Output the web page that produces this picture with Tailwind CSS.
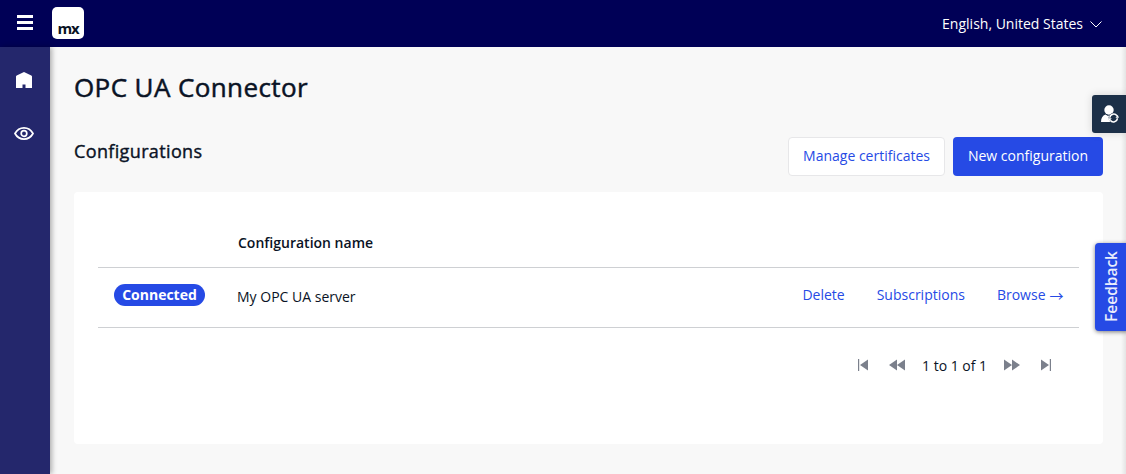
<!DOCTYPE html>
<html lang="en">
<head>
<meta charset="utf-8">
<title>OPC UA Connector</title>
<script src="https://cdn.jsdelivr.net/npm/@tailwindcss/browser@4"></script>
</head>
<body class="relative flex h-[474px] w-[1126px] flex-col overflow-hidden bg-[#f8f8f8] font-['Open_Sans','Noto_Sans',sans-serif] text-[14px] leading-5 text-[#0a1325]">
  <header class="flex h-[47px] shrink-0 items-center bg-[#000056] pl-[17px] pr-6 text-white">
    <svg class="mb-[2px] h-[15px] w-4" viewBox="0 0 16 15" fill="currentColor"><path d="M0 0h16v3H0zM0 6h16v3H0zM0 12h16v3H0z"/></svg>
    <div class="mb-px ml-[19px] flex h-8 w-8 items-end justify-center rounded-[5px] bg-white pb-[2px] text-[15px] font-bold leading-[18px] tracking-[-1.200px] text-[#0a1325]">mx</div>
    <div class="ml-auto flex items-center">
      <span>English, United States</span>
      <svg class="ml-[7px] mt-[2px] h-[7px] w-3" viewBox="0 0 12 7" fill="none" stroke="currentColor" stroke-width="1"><path d="M.5.5 6 6 11.5.5"/></svg>
    </div>
  </header>
  <div class="flex min-h-0 flex-1">
    <nav class="flex w-[50px] shrink-0 flex-col items-center bg-[#24276c] pr-[2px] pt-[25px] text-white shadow-[2px_0_5px_rgba(0,0,0,0.3)]">
      <svg class="h-4 w-4" viewBox="0 0 16 16" fill="currentColor"><path d="M8 0l7.300 3.500q.7.300.7 1V16H9.500v-3.500h-3V16H0V4.500q0-.7.7-1z"/></svg>
      <svg class="mt-[39px] h-[13px] w-5" viewBox="0 0 20 13" fill="none" stroke="currentColor" stroke-width="1.700"><path d="M1 6.500C3 2.800 6.200.9 10 .9s7 1.900 9 5.600c-2 3.700-5.200 5.600-9 5.600S3 10.200 1 6.500z"/><circle cx="10" cy="6.500" r="2.800"/></svg>
    </nav>
    <main class="flex-1 pl-6 pr-[23px] pt-[22px]">
      <h1 class="whitespace-nowrap text-[26px] font-normal leading-9 tracking-[0.400px] [-webkit-text-stroke:0.500px_#0a1325]">OPC UA Connector</h1>
      <div class="mt-8 flex h-[39px] justify-between">
        <h2 class="pt-[2px] text-[18px] font-normal leading-6 tracking-[0.360px] [-webkit-text-stroke:0.400px_#0a1325]">Configurations</h2>
        <div class="flex gap-2">
          <button class="w-[157px] rounded-[4px] border border-[#e7e7e9] bg-white pb-[2px] text-[#264ae5]">Manage certificates</button>
          <button class="w-[150px] rounded-[4px] bg-[#264ae5] pb-[2px] text-white">New configuration</button>
        </div>
      </div>
      <section class="mt-4 h-[252px] rounded-[4px] bg-white px-6 pt-[35px]">
        <div class="h-[41px] border-b border-[#ced0d3] pl-[140px] pt-[6px] text-[14px] font-semibold leading-5">Configuration name</div>
        <div class="flex h-[60px] border-b border-[#ced0d3] pl-4 pr-[15.500px] pt-4">
          <span class="h-[22px] w-[91px] rounded-full bg-[#264ae5] text-center font-bold leading-[22px] text-white">Connected</span>
          <span class="ml-8 pt-[3px]">My OPC UA server</span>
          <div class="ml-auto flex gap-8 pt-px text-[#264ae5]"><a>Delete</a><a>Subscriptions</a><a class="flex">Browse<span class="ml-1 font-['Noto_Sans_CJK_JP',sans-serif]">→</span></a></div>
        </div>
        <div class="flex items-center pl-[760px] pt-[28px] text-[#7b808c]">
          <svg class="mb-[2px] h-3 w-[10px]" viewBox="0 0 10 12" fill="currentColor"><path d="M0 0h1.200v12H0zM10 .5v11L2 6z"/></svg>
          <svg class="mb-[2px] ml-[21px] h-3 w-4" viewBox="0 0 16 12" fill="currentColor"><path d="M8 .5v11L0 6zM16 .5v11L8 6z"/></svg>
          <span class="ml-[17px] text-[#0a1325]">1 to 1 of 1</span>
          <svg class="mb-[2px] ml-[17px] h-3 w-4" viewBox="0 0 16 12" fill="currentColor"><path d="M0 .5v11L8 6zM8 .5v11L16 6z"/></svg>
          <svg class="mb-[2px] ml-[21px] h-3 w-[10px]" viewBox="0 0 10 12" fill="currentColor"><path d="M8.800 0H10v12H8.800zM0 .5v11L8 6z"/></svg>
        </div>
      </section>
    </main>
  </div>
  <div class="absolute right-0 top-[47px] h-[427px] w-[5px] bg-linear-to-r from-black/0 to-black/8"></div>
  <div class="absolute right-0 top-[95px] flex h-[38px] w-[34px] items-center rounded-l-[3px] bg-[#1c3048] pl-[9px] text-white shadow-[0_0_8px_rgba(0,0,0,0.15)]">
    <svg class="h-[18px] w-[18px]" viewBox="0 0 18 18"><circle cx="8" cy="5" r="4.700" fill="currentColor"/><path fill="currentColor" d="M0 17c0-4 1.500-6.500 4.500-7.500L7 11l2-1.200 3 1.200V17z"/><circle cx="12.600" cy="13" r="5" fill="#1c3048"/><path fill="none" stroke="currentColor" stroke-width="1.500" d="M8.800 12.700a3.900 3.900 0 0 1 7.100-1.900M16.400 13.300a3.900 3.900 0 0 1-7.100 1.900"/><path fill="currentColor" d="M14.500 12.700h3.500l-1.300-3zM7.200 13.300h3.500l-2.300 3z"/></svg>
  </div>
  <div class="absolute right-[-3px] top-[243px] flex h-[88px] w-[34px] items-center justify-center rounded-[4px] bg-[#264ae5] pr-[2px] text-[#e9edfc] shadow-[0_1px_4px_rgba(0,0,0,0.5)]"><span class="mb-px rotate-180 text-[15.500px] font-semibold leading-5 [writing-mode:vertical-rl]">Feedback</span></div>
</body>
</html>
